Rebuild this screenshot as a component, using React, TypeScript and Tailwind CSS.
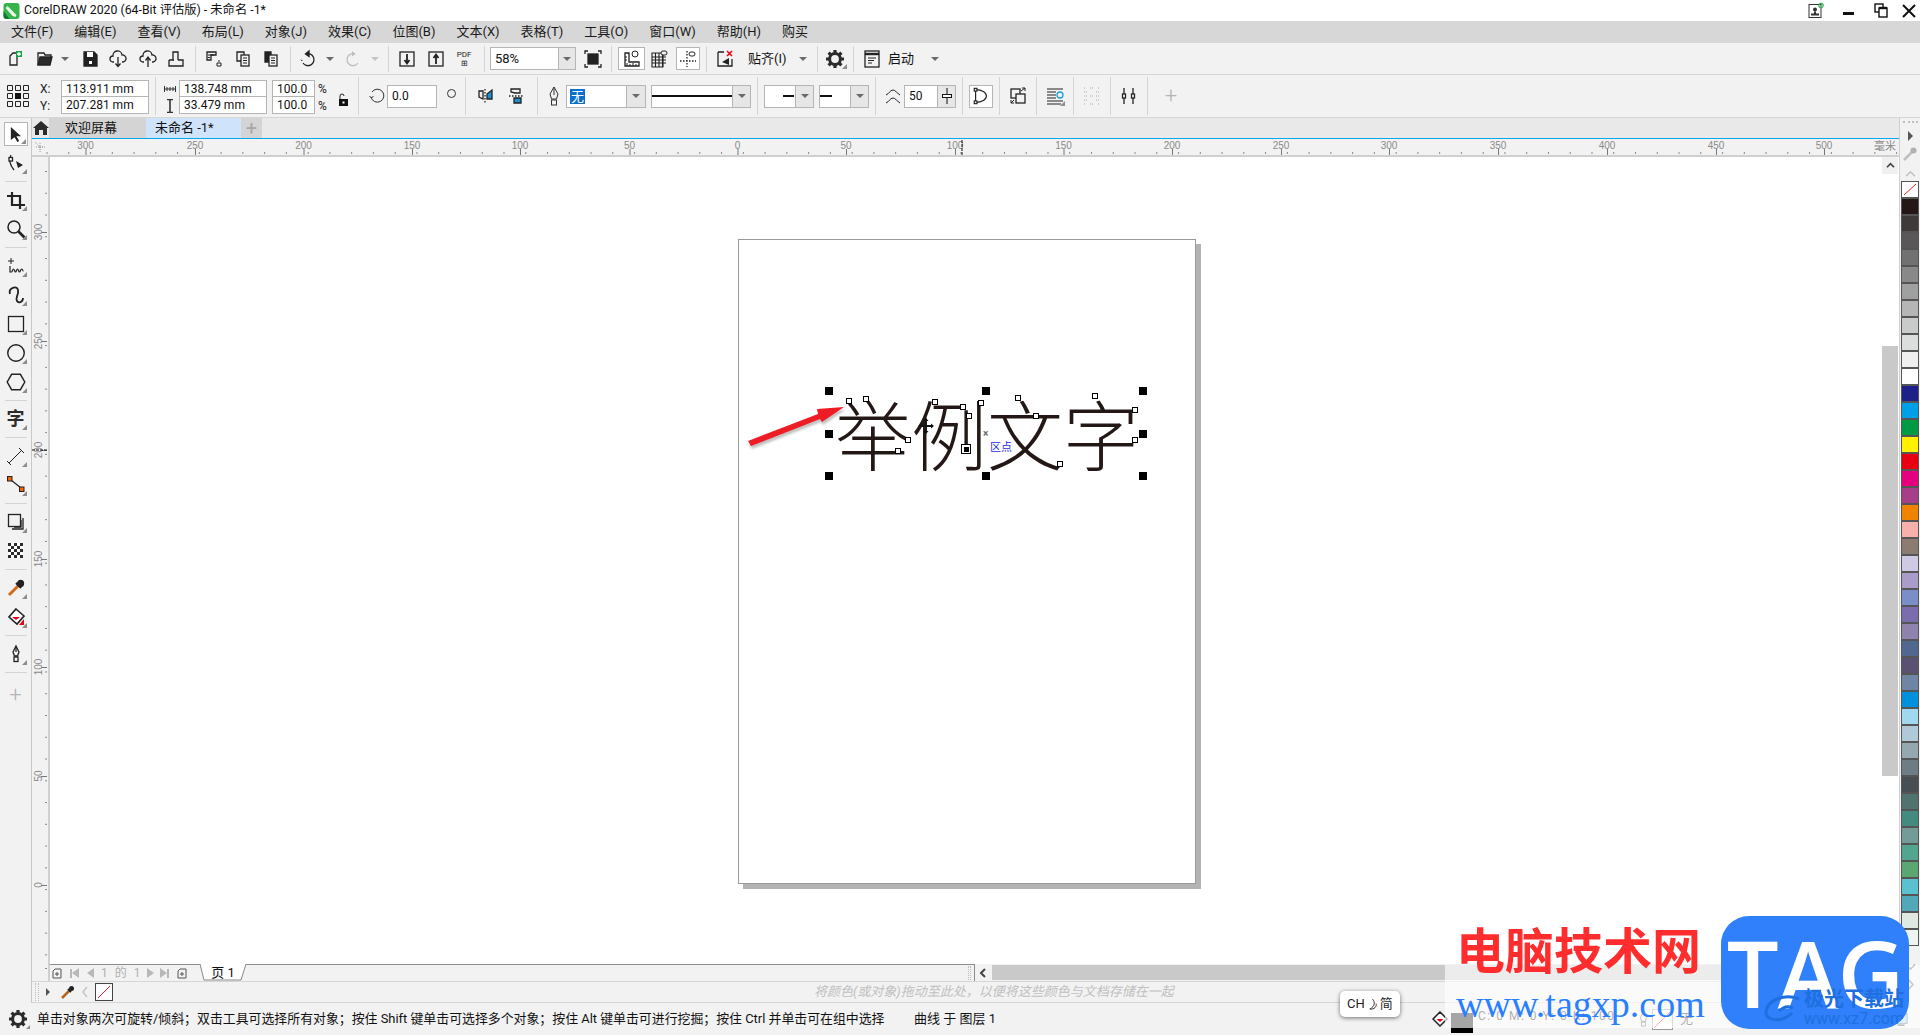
import type { ReactNode } from "react";

const FONT = 'Roboto,"Noto Sans CJK SC",sans-serif';

const SWATCHES = [
  "#231815", "#3e3a39", "#595757", "#727171", "#898989", "#9fa0a0", "#b5b5b6", "#c9caca", "#dcdddd", "#efefef", "#ffffff",
  "#1d2088", "#00a0e9", "#009944", "#fff100", "#e60012", "#e4007f", "#a73e8a", "#f08300", "#f5b1aa", "#8c7b70", "#cfc9e5",
  "#a99ccb", "#7a8fc8", "#7b6cae", "#8f82ad", "#506790", "#5a5072", "#6e86a3", "#0090dc", "#a0d8ef", "#b0c9d9", "#95a8b0",
  "#6e7d84", "#474f55", "#51736f", "#438b7e", "#739c98", "#52a68f", "#5aa772", "#5bc0cf", "#50a8b8", "#e0e8e2", "#eef4ef",
];

const MENUS = ["文件(F)", "编辑(E)", "查看(V)", "布局(L)", "对象(J)", "效果(C)", "位图(B)", "文本(X)", "表格(T)", "工具(O)", "窗口(W)", "帮助(H)", "购买"];

const NODES = [
  [849, 401], [866, 399], [908, 440], [898, 451], [935, 402], [963, 407], [981, 403], [969, 416], [1018, 398], [1036, 416], [1060, 464], [1095, 396], [1135, 410], [1135, 440],
];
const HANDLES = [
  [829, 391], [986, 391], [1143, 391], [829, 434], [1143, 434], [829, 476], [986, 476], [1143, 476],
];

function Sep({ className = "" }: { className?: string }) {
  return <div className={`w-px h-[26px] bg-[#d4d4d4] shrink-0 ${className}`} />;
}

function Tall({ className = "" }: { className?: string }) {
  return <div className={`w-px h-[38px] bg-[#d4d4d4] shrink-0 ${className}`} />;
}

function Ico({ children, className = "", w = 20, h = 20 }: { children: ReactNode; className?: string; w?: number; h?: number }) {
  return (
    <svg viewBox="0 0 20 20" width={w} height={h} fill="none" stroke="#222" strokeWidth="1.3" className={`shrink-0 ${className}`}>
      {children}
    </svg>
  );
}

function Drop({ className = "", light = false }: { className?: string; light?: boolean }) {
  return (
    <div className={`w-[9px] flex justify-center shrink-0 ${className}`}>
      <div className={`w-0 h-0 border-x-[4px] border-x-transparent border-t-[4px] ${light ? "border-t-[#c4c4c4]" : "border-t-[#6a6a6a]"}`} />
    </div>
  );
}

function DropCell({ className = "" }: { className?: string }) {
  return (
    <div className={`h-full bg-[#e6e6e6] border-l border-[#b5b5b5] flex items-center justify-center shrink-0 ${className}`}>
      <div className="w-0 h-0 border-x-[4px] border-x-transparent border-t-[4px] border-t-[#6a6a6a]" />
    </div>
  );
}

function Field({ value, className = "" }: { value: string; className?: string }) {
  return <div className={`h-[17px] bg-white border border-[#b5b5b5] flex items-center pl-1 text-[12px] leading-none text-[#111] ${className}`}>{value}</div>;
}

function Corner() {
  return <div className="absolute right-[4px] bottom-[3px] w-0 h-0 border-l-[5px] border-l-transparent border-b-[5px] border-b-[#8c8c8c]" />;
}

function Tool({ children, corner = true, className = "" }: { children: ReactNode; corner?: boolean; className?: string }) {
  return (
    <div className={`relative h-[29px] w-full flex items-center justify-center shrink-0 ${className}`}>
      {children}
      {corner && <Corner />}
    </div>
  );
}

function ToolSep() {
  return (
    <div className="h-[8px] shrink-0 flex items-center justify-center">
      <div className="w-[22px] h-px bg-[#d4d4d4]" />
    </div>
  );
}

function Gear({ size = 20 }: { size?: number }) {
  return (
    <svg viewBox="0 0 20 20" width={size} height={size} className="shrink-0">
      <circle cx="10" cy="10" r="5.4" fill="none" stroke="#2b2b2b" strokeWidth="3" />
      <g stroke="#2b2b2b" strokeWidth="3.2">
        <path d="M10 1v3M10 16v3M1 10h3M16 10h3M3.6 3.6l2.2 2.2M14.2 14.2l2.2 2.2M3.6 16.4l2.2-2.2M14.2 5.8l2.2-2.2" />
      </g>
    </svg>
  );
}

function TitleBar() {
  return (
    <div className="h-[21px] bg-white flex items-center shrink-0">
      <svg viewBox="0 0 16 16" width="17" height="16" className="ml-[3px] shrink-0">
        <rect width="16" height="16" rx="3" fill="#36b34a" />
        <path d="M4 3l9 9-1 2-3-1-7-8z" fill="#e6f5e6" />
        <path d="M0 8l6 8H3a3 3 0 0 1-3-3z" fill="#0c7a2c" />
      </svg>
      <span className="ml-[4px] text-[12.3px] text-[#111] whitespace-nowrap">CorelDRAW 2020 (64-Bit 评估版) - 未命名 -1*</span>
      <div className="ml-auto flex items-center">
        <svg viewBox="0 0 16 16" width="16" height="17" className="mr-[19px]">
          <rect x="1" y="2" width="12" height="13" fill="none" stroke="#333" />
          <circle cx="7" cy="7" r="2" fill="#333" />
          <path d="M3 13h8v-2H8V9H6v2H3z" fill="#333" />
          <circle cx="13" cy="3" r="2.2" fill="none" stroke="#2eb65a" strokeWidth="1.2" />
        </svg>
        <div className="w-[11px] h-[3px] bg-[#111] mr-[20px] mt-[6px]" />
        <svg viewBox="0 0 14 15" width="14" height="15" className="mr-[14px]">
          <rect x="1" y="1" width="8" height="8" fill="none" stroke="#111" strokeWidth="1.4" />
          <rect x="5" y="5" width="8" height="9" fill="white" stroke="#111" strokeWidth="1.4" />
          <path d="M5 5h8" stroke="#111" strokeWidth="2.4" />
        </svg>
        <svg viewBox="0 0 14 14" width="14" height="14" className="mr-[4px]">
          <path d="M1 1l12 12M13 1L1 13" stroke="#111" strokeWidth="2" />
        </svg>
      </div>
    </div>
  );
}

function MenuBar() {
  return (
    <div className="h-[22px] bg-[#d7d7d7] flex items-center pl-[11px] gap-[21px] shrink-0 text-[13px] text-[#1a1a1a]">
      {MENUS.map((m) => (
        <span key={m} className="whitespace-nowrap">{m}</span>
      ))}
    </div>
  );
}

function MainToolbar() {
  return (
    <div className="h-[32px] bg-[#f2f2f2] border-b border-[#d6d6d6] flex items-center shrink-0 text-[13px] text-[#111]">
      <Ico className="ml-[5px]"><path d="M5 7l3-3h4v12H5z" /><rect x="11" y="2" width="6" height="6" fill="#16a34a" stroke="none" /><path d="M14 3v4M12 5h4" stroke="#fff" /></Ico>
      <Ico className="ml-[10px]"><path d="M3 16V4h6l1 2h6v2" /><path d="M3 16l2-8h12l-2 8z" fill="#2b2b2b" /></Ico>
      <Drop className="ml-[5px]" />
      <Ico className="ml-[11px]"><path d="M4 3h10l3 3v11H4z" fill="#222" /><rect x="7" y="3" width="6" height="5" fill="#fff" stroke="none" /><rect x="9" y="12" width="3" height="3" fill="#fff" stroke="none" /></Ico>
      <Ico className="ml-[8px]"><path d="M6 13H5a3 3 0 0 1 0-6 4.5 4.5 0 0 1 9-1 3.5 3.5 0 0 1 1 7h-1" /><path d="M10 8v9M7.5 14.5l2.5 3 2.5-3" /></Ico>
      <Ico className="ml-[10px]"><path d="M6 13H5a3 3 0 0 1 0-6 4.5 4.5 0 0 1 9-1 3.5 3.5 0 0 1 1 7h-1" /><path d="M10 18V9M7.5 11.5L10 8l2.5 3.5" /></Ico>
      <Ico className="ml-[8px]"><path d="M7 11V3h5v8M3 11h5M12 11h5v6H3v-6" /></Ico>
      <Sep className="ml-[9px]" />
      <Ico className="ml-[8px]"><path d="M3 3h9v3H7v5H3z" /><path d="M4 6h6M4 8.5h2M13 14h4v3h-4zM14 12h2" strokeWidth="1" /></Ico>
      <Ico className="ml-[9px]"><path d="M4 3h7v9H4z" /><rect x="8" y="6" width="8" height="11" fill="#f2f2f2" /><path d="M10 9h4M10 11.5h4M10 14h4" strokeWidth="1" /></Ico>
      <Ico className="ml-[8px]"><path d="M4 3h6v10H4z" fill="#222" /><rect x="8" y="6" width="8" height="11" fill="#f2f2f2" /><path d="M10 9h4M10 11.5h4M10 14h4" strokeWidth="1" /></Ico>
      <Sep className="ml-[9px]" />
      <Ico className="ml-[7px]"><path d="M8 5a6 6 0 1 1-3 9" /><path d="M4 12l-1-2" strokeDasharray="1 1" /><path d="M11 2L7.5 5l3.5 2.5z" fill="#222" /></Ico>
      <Drop className="ml-[7px]" />
      <Ico className="ml-[9px]"><path d="M12 5a6 6 0 1 0 3 9" stroke="#bdbdbd" /><path d="M9 2l3.5 3L9 7.5z" fill="#bdbdbd" stroke="none" /></Ico>
      <Drop className="ml-[7px]" light />
      <Sep className="ml-[9px]" />
      <Ico className="ml-[8px]"><rect x="3" y="3" width="14" height="14" /><path d="M10 5v9M7.5 11l2.5 3.5 2.5-3.5" strokeWidth="1.8" /></Ico>
      <Ico className="ml-[9px]"><rect x="3" y="3" width="14" height="14" /><path d="M10 15V6M7.5 9L10 5.5 12.5 9" strokeWidth="1.8" /></Ico>
      <div className="ml-[8px] w-5 text-center text-[8px] leading-[9px] text-[#222] shrink-0">PDF<br />⊞</div>
      <Sep className="ml-[10px]" />
      <div className="ml-[5px] w-[86px] h-[23px] bg-white border border-[#b5b5b5] flex items-center shrink-0">
        <span className="pl-1 flex-1">58%</span>
        <DropCell className="w-[17px]" />
      </div>
      <Ico className="ml-[7px]"><rect x="5" y="5" width="10" height="10" fill="#222" /><path d="M2 5V2h3M15 2h3v3M18 15v3h-3M5 18H2v-3" /></Ico>
      <Sep className="ml-[8px]" />
      <div className="ml-[6px] w-[27px] h-[23px] border border-[#b5b5b5] bg-white flex items-center justify-center shrink-0">
        <Ico><path d="M3 4v13h14v-4H7V4z" /><path d="M5 14v3M8 15v2M11 14v3M14 15v2M3 8h2M3 11h2" strokeWidth="1" /><circle cx="13" cy="5" r="3" strokeWidth="1" /></Ico>
      </div>
      <Ico className="ml-[4px]"><path d="M3 4h11v14H3zM3 8h14M3 11h14M3 14h14M6.5 4v14M10 4v14M13.5 4v14" strokeWidth="1.1" /><rect x="12" y="2" width="6" height="4" rx="2" fill="#f2f2f2" strokeWidth="1" /></Ico>
      <div className="ml-[7px] w-[24px] h-[23px] border border-[#b5b5b5] bg-white flex items-center justify-center shrink-0">
        <Ico><path d="M9 2v16M2 12h16" strokeDasharray="1.5 1.5" /><rect x="11" y="3" width="6" height="4" rx="2" strokeWidth="1" /></Ico>
      </div>
      <Sep className="ml-[6px]" />
      <Ico className="ml-[8px]"><path d="M3 3h6M3 3v14h14v-7" /><path d="M12 2l5 5M17 2l-5 5" stroke="#e60012" strokeWidth="1.5" /><path d="M14 9l-7 4 7 3z" fill="#222" stroke="none" /></Ico>
      <span className="ml-[13px] w-[39px] whitespace-nowrap shrink-0">贴齐(I)</span>
      <Drop className="ml-[11px]" />
      <Sep className="ml-[10px]" />
      <div className="relative ml-[7px] shrink-0 w-5 h-5"><Gear /><div className="absolute -right-[2px] bottom-0 w-0 h-0 border-l-[5px] border-l-transparent border-b-[5px] border-b-[#8c8c8c]" /></div>
      <Sep className="ml-[8px]" />
      <Ico className="ml-[8px]"><rect x="3" y="2" width="14" height="16" /><path d="M3 5h14" strokeWidth="2.4" /><path d="M6 9h8M6 11.5h6M6 14h4" strokeWidth="1" /></Ico>
      <span className="ml-[6px] w-[26px] whitespace-nowrap shrink-0">启动</span>
      <Drop className="ml-[16px]" />
    </div>
  );
}

function PropertyBar() {
  return (
    <div className="h-[43px] bg-[#f2f2f2] border-b border-[#d6d6d6] flex items-center shrink-0 text-[12px] text-[#111]">
      <svg viewBox="0 0 24 24" width="24" height="24" fill="none" stroke="#222" className="ml-[6px] shrink-0">
        <path d="M1.5 1.5h5v5h-5zM9.5 1.5h5v5h-5zM17.5 1.5h5v5h-5zM1.5 9.5h5v5h-5zM17.5 9.5h5v5h-5zM1.5 17.5h5v5h-5zM9.5 17.5h5v5h-5zM17.5 17.5h5v5h-5z" />
        <rect x="9" y="9" width="6" height="6" fill="#111" stroke="none" />
      </svg>
      <div className="ml-[10px] w-[20px] mt-[2px] flex flex-col shrink-0 gap-[3px] text-[#222]">
        <span className="leading-[14px]">X:</span>
        <span className="leading-[14px]">Y:</span>
      </div>
      <div className="ml-[1px] w-[88px] mt-[2px] shrink-0 flex flex-col"><Field value="113.911 mm" /><Field value="207.281 mm" className="border-t-0" /></div>
      <Tall className="ml-[6px]" />
      <div className="ml-[8px] w-[12px] mt-[2px] shrink-0 flex flex-col items-center gap-[3px]">
        <svg viewBox="0 0 12 14" width="12" height="14" stroke="#333" fill="none"><path d="M.5 4v6M11.5 4v6M1 7h10" /><path d="M3 5v4M6 5v4M9 5v4" /></svg>
        <svg viewBox="0 0 12 14" width="12" height="14" stroke="#333" fill="none"><path d="M3 .5h6M3 13.5h6M6 1v12" strokeWidth="1.6" /></svg>
      </div>
      <div className="ml-[3px] w-[88px] mt-[2px] shrink-0 flex flex-col"><Field value="138.748 mm" /><Field value="33.479 mm" className="border-t-0" /></div>
      <div className="ml-[5px] w-[43px] mt-[2px] shrink-0 flex flex-col"><Field value="100.0" /><Field value="100.0" className="border-t-0" /></div>
      <div className="ml-[3px] w-[10px] mt-[2px] shrink-0 flex flex-col gap-[3px] text-[#222]">
        <span className="leading-[14px]">%</span>
        <span className="leading-[14px]">%</span>
      </div>
      <svg viewBox="0 0 10 13" width="10" height="13" className="ml-[10px] mt-[6px] shrink-0">
        <path d="M2 6V3a2 2 0 0 1 4 0" fill="none" stroke="#222" />
        <rect x="1" y="6" width="9" height="7" fill="#111" />
        <rect x="4.5" y="8.5" width="2" height="2" fill="#fff" />
      </svg>
      <Tall className="ml-[10px]" />
      <svg viewBox="0 0 16 16" width="16" height="16" fill="none" stroke="#333" className="ml-[10px] shrink-0">
        <path d="M3 4a6.5 6.5 0 1 1-1 5" /><path d="M.5 8L2.5 10 4.5 8" />
      </svg>
      <div className="ml-[2px] w-[50px] h-[23px] bg-white border border-[#b5b5b5] flex items-center pl-1 shrink-0">0.0</div>
      <div className="ml-[10px] w-[9px] h-[9px] rounded-full border border-[#333] mb-[6px] shrink-0" />
      <Tall className="ml-[9px]" />
      <Ico className="ml-[10px]"><path d="M9 3v14" strokeDasharray="1.5 1.5" /><path d="M3 5h4v8l-4-2z" /><path d="M11 13h5V4l-5 4z" fill="#1f8fcf" stroke="#222" /></Ico>
      <Ico className="ml-[10px]"><path d="M3 10h14" strokeDasharray="1.5 1.5" /><path d="M5 3h9v4H9l-4-1z" /><path d="M8 12h7v5H8z" fill="#1f8fcf" stroke="#222" /></Ico>
      <Tall className="ml-[11px]" />
      <svg viewBox="0 0 14 20" width="14" height="20" fill="none" stroke="#333" className="ml-[9px] shrink-0">
        <path d="M7 1l4 7-1.5 5h-5L3 8z" /><path d="M7 1v8" /><rect x="4.5" y="14" width="5" height="5" />
      </svg>
      <div className="ml-[5px] w-[80px] h-[23px] bg-white border border-[#b5b5b5] flex items-center pl-[3px] shrink-0">
        <span className="bg-[#0a6fd0] text-white px-px leading-[15px] text-[13px]">无</span>
        <DropCell className="ml-auto w-[19px]" />
      </div>
      <div className="ml-[5px] w-[100px] h-[23px] bg-white border border-[#b5b5b5] flex items-center shrink-0">
        <div className="flex-1 h-[1.5px] bg-[#111]" />
        <DropCell className="w-[18px]" />
      </div>
      <Tall className="ml-[6px]" />
      <div className="ml-[6px] w-[50px] h-[23px] bg-white border border-[#b5b5b5] flex items-center shrink-0">
        <div className="ml-auto w-[11px] h-[2px] bg-[#111]" />
        <DropCell className="ml-[1px] w-[18px]" />
      </div>
      <div className="ml-[5px] w-[50px] h-[23px] bg-white border border-[#b5b5b5] flex items-center shrink-0">
        <div className="w-[12px] h-[2px] bg-[#111]" />
        <DropCell className="ml-auto w-[18px]" />
      </div>
      <Tall className="ml-[6px]" />
      <Ico className="ml-[7px]" w={20} h={24}><path d="M3 9c3-1 4-5 7-5 2 0 4 3 7 5M3 17c3-1 4-5 7-5 2 0 4 3 7 5" strokeWidth="1" /></Ico>
      <div className="ml-[1px] w-[52px] h-[23px] bg-white border border-[#b5b5b5] flex items-center pl-1 shrink-0">
        <span>50</span>
        <div className="ml-auto w-[18px] h-full bg-[#e6e6e6] border-l border-[#b5b5b5] flex items-center justify-center">
          <svg viewBox="0 0 10 18" width="10" height="18"><path d="M5 1v16" stroke="#111" /><rect x=".5" y="7.5" width="9" height="3" fill="#fff" stroke="#111" /></svg>
        </div>
      </div>
      <Tall className="ml-[6px]" />
      <div className="ml-[6px] w-[24px] h-[23px] border border-[#b5b5b5] bg-white flex items-center justify-center shrink-0">
        <Ico w={18} h={18}><path d="M4 3v14" /><path d="M4 3c7 0 12 3 12 7s-5 7-12 7" /><rect x="2.500" y="1.500" width="3" height="3" fill="#fff" /><rect x="2.500" y="15.500" width="3" height="3" fill="#fff" /></Ico>
      </div>
      <Tall className="ml-[6px]" />
      <Ico className="ml-[8px]"><rect x="3" y="3" width="9" height="9" /><rect x="8" y="8" width="9" height="9" fill="#f2f2f2" /><path d="M13 5l4-3M14 2h3v3M3 17l3-3M3 14v3h3" strokeWidth="1" /></Ico>
      <Tall className="ml-[8px]" />
      <div className="relative ml-[8px] shrink-0 w-5 h-5">
        <Ico><path d="M2 3h16M2 6h9M2 9h9M2 12h9M2 15h16M2 18h14" strokeWidth="1" /><circle cx="15" cy="9" r="3" stroke="#1f9fdc" /></Ico>
        <div className="absolute right-0 bottom-0 w-0 h-0 border-l-[5px] border-l-transparent border-b-[5px] border-b-[#8c8c8c]" />
      </div>
      <Tall className="ml-[8px]" />
      <Ico className="ml-[8px]"><path d="M2 2h2M8 2h4M16 2h2M2 6h4M14 6h4M2 10h4M8 10h4M14 10h4M2 14h4M14 14h4M2 18h2M8 18h4M16 18h2" stroke="#c0c0c0" strokeDasharray="1 1" /></Ico>
      <Tall className="ml-[8px]" />
      <Ico className="ml-[8px]"><path d="M5 2v16M14 2v16" /><rect x="3.500" y="8" width="3" height="4" fill="#fff" /><rect x="12.500" y="8" width="3" height="4" fill="#fff" /></Ico>
      <Tall className="ml-[8px]" />
      <div className="ml-[13px] text-[#b4b4b4] text-[22px] leading-none w-5 text-center shrink-0 font-light">+</div>
    </div>
  );
}

function LeftBar() {
  return (
    <div className="w-[32px] shrink-0 bg-[#f2f2f2] border-r border-[#c8c8c8] flex flex-col">
      <div className="relative mx-auto mt-[4px] w-[24px] h-[24px] bg-white border border-[#b5b5b5] flex items-center justify-center shrink-0">
        <svg viewBox="0 0 14 18" width="13" height="17"><path d="M2 1v14l4-3 3 5 2-1-3-5h5z" fill="#222" /></svg>
        <div className="absolute right-[1px] bottom-[1px] w-0 h-0 border-l-[5px] border-l-transparent border-b-[5px] border-b-[#8c8c8c]" />
      </div>
      <Tool className="mt-[2px]"><Ico><path d="M5 2c-2 4-2 9 3 15" /><rect x="3" y="4.500" width="3.500" height="3.500" fill="#fff" /><path d="M10 8l7 4-5 3z" fill="#222" stroke="none" /></Ico></Tool>
      <ToolSep />
      <Tool><Ico><path d="M6 2v13h13M1 6h13v13" strokeWidth="2.2" /></Ico></Tool>
      <Tool><Ico><circle cx="8" cy="8" r="6" strokeWidth="1.500" /><path d="M12.500 12.500l6 6" strokeWidth="2.600" /></Ico></Tool>
      <ToolSep />
      <Tool><Ico><path d="M5 2v6M2 5h6" strokeWidth="1" /><path d="M4 10v6h1.500c1 0 1-3 2-3s1 3 2 3 1-3 2-3 1 3 2 3 1-3 2-3 1 2 2 2" strokeWidth="1.200" /></Ico></Tool>
      <Tool><Ico><path d="M4 9c-2-6 7-9 8-4s-3 7-1 11c1 2 6 2 6-3" strokeWidth="1.800" /></Ico></Tool>
      <Tool><Ico><rect x="2.500" y="2.500" width="15" height="15" /></Ico></Tool>
      <Tool><Ico w={22} h={22}><circle cx="10" cy="10" r="7.500" /></Ico></Tool>
      <Tool><Ico w={22} h={22}><path d="M6 3h8l4 7-4 7H6l-4-7z" /></Ico></Tool>
      <ToolSep />
      <Tool><span className="text-[18px] font-bold leading-none text-[#2b2b2b]">字</span></Tool>
      <ToolSep />
      <Tool><Ico><path d="M3 17L16 4M13 2l5 5M1 15l4 4" strokeWidth="1" /></Ico></Tool>
      <Tool><Ico><path d="M5 5l10 8" /><rect x="1.500" y="1.500" width="4.500" height="4.500" fill="#f26500" stroke="#222" strokeWidth="1" /><rect x="13.500" y="12" width="4.500" height="4.500" fill="#f26500" stroke="#222" strokeWidth="1" /></Ico></Tool>
      <ToolSep />
      <Tool><Ico><rect x="2.500" y="2.500" width="12" height="12" /><path d="M17 6v11H6M15 8v7H8" /></Ico></Tool>
      <Tool corner={false}>
        <div className="w-[15px] h-[15px] grid grid-cols-5 grid-rows-5 bg-white">
          {[...Array(25)].map((_, i) => (
            <div key={i} className={i % 2 === 0 ? "bg-[#2b2b2b]" : "bg-white"} />
          ))}
        </div>
      </Tool>
      <ToolSep />
      <Tool><Ico><path d="M3 17l9-9" stroke="#d56b18" strokeWidth="3" /><path d="M10 5l5 5" strokeWidth="2" /><circle cx="14.500" cy="5.500" r="3" fill="#222" /></Ico></Tool>
      <Tool>
        <Ico><path d="M10 2l8 7-7 8-8-7z" fill="#fff" strokeWidth="1.600" /><path d="M6 10h8l-4 3z" fill="#e60012" stroke="none" /><path d="M18 12v6h-5z" fill="#e60012" stroke="none" /></Ico>
      </Tool>
      <ToolSep />
      <Tool><Ico><path d="M10 2l3 6-1.500 4h-3L7 8z" /><path d="M10 2v6" /><rect x="8" y="13" width="4" height="4.500" /></Ico></Tool>
      <ToolSep />
      <Tool corner={false} className="mt-[4px]"><span className="text-[#b4b4b4] text-[22px] leading-none font-light">+</span></Tool>
    </div>
  );
}

function TabRow() {
  return (
    <div className="h-[21px] shrink-0 bg-[#e9e9e9] border-b border-[#00a8f0] flex items-stretch text-[13px] text-[#111]">
      <div className="w-[17px] flex items-center justify-center shrink-0">
        <svg viewBox="0 0 16 16" width="16" height="16"><path d="M8 1l8 7h-2v7h-4v-5H6v5H2V8H0z" fill="#2b2b2b" /></svg>
      </div>
      <div className="w-[97px] bg-[#d4d4d4] pl-[16px] flex items-center shrink-0">欢迎屏幕</div>
      <div className="w-[95px] bg-[#cfe3fb] pl-[9px] flex items-center shrink-0">未命名 -1*</div>
      <div className="w-[21px] bg-[#d4d4d4] text-[#a8a8a8] text-[20px] flex items-center justify-center leading-none shrink-0">+</div>
    </div>
  );
}

function HRuler() {
  const labels = [
    [86.5, "300"], [196, "250"], [304.5, "200"], [413, "150"], [521, "100"], [630.5, "50"], [738.5, "0"], [847, "50"], [956, "100"], [1064.5, "150"], [1173, "200"],
    [1282, "250"], [1390, "300"], [1499, "350"], [1608, "400"], [1717, "450"], [1825, "500"],
  ] as const;
  const ticks = Array.from({ length: 90 }, (_, i) => 4 + i * 21.76);
  return (
    <div className="h-[18px] shrink-0 bg-[#f2f2f2] border-b-2 border-[#d0d0d0]">
      <svg width="1867" height="16" viewBox="33 139 1867 16" className="block">
        <path d="M36 142l5 5M41 147v5M41 147h5M37 147h8M41 143v8" stroke="#a0a0a0" strokeWidth="1" strokeDasharray="1 1" fill="none" />
        {ticks.map((t, i) => (
          <rect key={i} x={t} y={152} width="1" height="2" fill="#888" />
        ))}
        {labels.map(([x, l]) => (
          <g key={x}>
            <rect x={x} y={149} width="1" height="6" fill="#777" />
            <text x={x} y={149} textAnchor="middle" fontSize="10" fill="#8a8a8a" fontFamily="Liberation Sans">{l}</text>
          </g>
        ))}
        <text x="1886" y="150" textAnchor="middle" fontSize="11" fill="#8a8a8a" fontFamily="Noto Sans CJK SC">毫米</text>
        <path d="M963 140v15" stroke="#111" strokeDasharray="3 1" />
      </svg>
    </div>
  );
}

function VRuler() {
  const labels = [[232, "300"], [341, "250"], [450, "200"], [559, "150"], [667, "100"], [776, "50"], [885, "0"]] as const;
  const ticks = Array.from({ length: 38 }, (_, i) => 14 + i * 21.76);
  return (
    <div className="w-[18px] shrink-0 bg-[#f2f2f2] border-r-2 border-[#d0d0d0]">
      <svg width="16" height="808" viewBox="33 157 16 808" className="block">
        {ticks.map((t, i) => (
          <rect key={i} x="46" y={157 + t} width="2" height="1" fill="#888" />
        ))}
        {labels.map(([y, l]) => (
          <g key={y}>
            <rect x="42" y={y} width="6" height="1" fill="#777" />
            <text x="0" y="0" textAnchor="middle" fontSize="10" fill="#8a8a8a" fontFamily="Liberation Sans" transform={`translate(43 ${y}) rotate(-90)`}>{l}</text>
          </g>
        ))}
        <path d="M33 450h15" stroke="#111" strokeDasharray="3 1" />
      </svg>
    </div>
  );
}

function Canvas() {
  return (
    <div className="relative flex-1 bg-white overflow-hidden">
      <div className="absolute left-[688px] top-[82px] w-[458px] h-[645px] bg-white border border-[#9a9a9a] shadow-[5px_5px_0_#b3b3b3]" />
      <div className="absolute left-[785px] top-[235px] flex text-[76px] leading-[80px] font-light text-[#231815] whitespace-nowrap" style={{ fontFamily: '"Noto Sans CJK SC",sans-serif' }}>
        <span className="w-[76px]">举</span>
        <span className="w-[76px]">例</span>
        <span className="w-[76px]">文</span>
        <span className="w-[76px]">字</span>
      </div>
      <svg className="absolute left-[695px] top-[240px]" width="110" height="70" viewBox="745 397 110 70">
        <path d="M748 441L818 414l-1-5 27-2-22 15-2-3-69 27z" fill="#777" opacity=".45" transform="translate(1 3)" className="blur-[1px]" />
        <path d="M748 441L818 414l-1-5 27-2-22 15-2-3-69 27z" fill="#ee1c25" />
      </svg>
      {NODES.map(([x, y]) => (
        <div key={`${x}-${y}`} className="absolute w-[6px] h-[6px] -ml-[3px] -mt-[3px] bg-white border border-black" style={{ left: x - 50, top: y - 157 }} />
      ))}
      {HANDLES.map(([x, y]) => (
        <div key={`${x}-${y}`} className="absolute w-[8px] h-[8px] -ml-[4px] -mt-[4px] bg-black" style={{ left: x - 50, top: y - 157 }} />
      ))}
      <svg className="absolute left-[868px] top-[261px]" width="16" height="16" viewBox="0 0 16 16">
        <path d="M8 1v14M1 8h14" stroke="#111" strokeWidth="1.800" />
        <path d="M8 0l2.500 3h-5zM8 16l2.500-3h-5zM0 8l3-2.500v5zM16 8l-3-2.500v5z" fill="#111" />
      </svg>
      <div className="absolute left-[911px] top-[287px] w-[10px] h-[10px] border border-black bg-white flex items-center justify-center">
        <div className="w-[5px] h-[5px] bg-black" />
      </div>
      <div className="absolute left-[933px] top-[272px] text-[#666] text-[10px] leading-none font-bold">×</div>
      <div className="absolute left-[940px] top-[283px] text-[#2b2bf0] text-[11px] leading-[16px] whitespace-nowrap">区点</div>
    </div>
  );
}

function VScroll() {
  return (
    <div className="w-[17px] shrink-0 bg-white pr-px flex flex-col">
      <div className="h-[17px] bg-[#f0f0f0] flex items-center justify-center shrink-0">
        <svg viewBox="0 0 10 8" width="9" height="7"><path d="M1 6l4-4 4 4" fill="none" stroke="#444" strokeWidth="2" /></svg>
      </div>
      <div className="mt-[172px] h-[430px] bg-[#c9c9c9] shrink-0" />
      <svg viewBox="0 0 10 8" width="9" height="7" className="mt-auto mb-[6px] mx-auto shrink-0"><path d="M1 2l4 4 4-4" fill="none" stroke="#444" strokeWidth="2" /></svg>
    </div>
  );
}

function PageRow() {
  return (
    <div className="h-[18px] shrink-0 bg-[#f2f2f2] border-b border-[#d6d6d6] flex items-stretch text-[12px] text-[#b0b0b0]">
      <div className="w-[18px] shrink-0 border-r-2 border-[#d0d0d0] flex flex-col items-end pr-[1px] pt-[4px] gap-[9px]">
        <div className="w-[2px] h-px bg-[#888]" />
      </div>
      <div className="w-[925px] shrink-0 flex items-center border-t border-r border-[#8c8c8c]">
        <svg viewBox="0 0 10 11" width="10" height="11" fill="none" stroke="#555" className="ml-[2px] shrink-0"><path d="M1 3l2-2h6v9H1zM5 4v4M3 6h4" /></svg>
        <div className="ml-[8px] w-[1.5px] h-[9px] bg-[#b8b8b8] shrink-0" />
        <div className="w-0 h-0 border-y-[5px] border-y-transparent border-r-[7px] border-r-[#b8b8b8] shrink-0" />
        <div className="ml-[8.5px] w-0 h-0 border-y-[5px] border-y-transparent border-r-[7px] border-r-[#b8b8b8] shrink-0" />
        <span className="ml-[7px] w-[36px] text-center whitespace-nowrap tracking-[2px] shrink-0">1 的 1</span>
        <div className="ml-[9.5px] w-0 h-0 border-y-[5px] border-y-transparent border-l-[7px] border-l-[#b8b8b8] shrink-0" />
        <div className="ml-[6.5px] w-0 h-0 border-y-[5px] border-y-transparent border-l-[7px] border-l-[#b8b8b8] shrink-0" />
        <div className="w-[1.5px] h-[9px] bg-[#b8b8b8] shrink-0" />
        <svg viewBox="0 0 10 11" width="10" height="11" fill="none" stroke="#555" className="ml-[8px] shrink-0"><path d="M1 3l2-2h6v9H1zM5 4v4M3 6h4" /></svg>
        <div className="relative ml-[13px] w-[47px] h-[17px] -mt-px flex items-center justify-center text-[13px] text-[#111] shrink-0">
          <svg className="absolute inset-0" width="47" height="17" viewBox="0 0 47 17"><path d="M0 0l4 16h37l5-16" fill="#fff" stroke="#888" /></svg>
          <span className="relative">页 1</span>
        </div>
        <div className="ml-auto mr-[3px] w-[3px] h-[14px] border-x border-dotted border-[#bdbdbd] shrink-0" />
      </div>
      <div className="ml-[4px] flex items-center shrink-0">
        <svg viewBox="0 0 8 10" width="8" height="10"><path d="M6 1L2 5l4 4" fill="none" stroke="#444" strokeWidth="2" /></svg>
      </div>
      <div className="ml-[5px] flex-1 my-px bg-[#c9c9c9]" />
      <svg viewBox="0 0 14 14" width="14" height="14" fill="none" stroke="#777" className="mx-[2px] my-auto shrink-0"><circle cx="7" cy="7" r="5.500" /><circle cx="7" cy="7" r="1.500" /></svg>
    </div>
  );
}

function DockerRow() {
  return (
    <div className="h-[21px] shrink-0 bg-[#f2f2f2] flex items-center border-b border-[#d6d6d6] text-[#111]">
      <div className="ml-[3px] w-[4px] h-[18px] border-x border-dotted border-[#bdbdbd] shrink-0" />
      <div className="ml-[7px] w-0 h-0 border-y-[4px] border-y-transparent border-l-[4px] border-l-[#555] shrink-0" />
      <svg viewBox="0 0 14 14" width="14" height="14" className="ml-[11px] shrink-0"><path d="M1 13l8-8" stroke="#b5651d" strokeWidth="2.500" /><path d="M7 4l3 3" stroke="#222" strokeWidth="2" /><circle cx="10.500" cy="3.500" r="2.500" fill="#222" /></svg>
      <svg viewBox="0 0 8 12" width="8" height="12" className="ml-[6px] shrink-0"><path d="M6 1L2 6l4 5" fill="none" stroke="#c4c4c4" strokeWidth="1.500" /></svg>
      <svg viewBox="0 0 18 18" width="18" height="18" className="ml-[6px] shrink-0">
        <rect x=".5" y=".5" width="17" height="17" fill="#fff" stroke="#444" />
        <path d="M3 15L15 3" stroke="#e8222a" />
      </svg>
      <span className="ml-[701px] text-[13px] italic text-[#c0c0c0] whitespace-nowrap">将颜色(或对象)拖动至此处，以便将这些颜色与文档存储在一起</span>
    </div>
  );
}

function StatusBar() {
  return (
    <div className="h-[32px] shrink-0 bg-[#f2f2f2] flex items-center text-[13px] text-[#111]">
      <div className="relative ml-[8px] w-5 h-5 shrink-0"><Gear /><div className="absolute -right-[2px] bottom-0 w-0 h-0 border-l-[4px] border-l-transparent border-b-[4px] border-b-[#8c8c8c]" /></div>
      <span className="ml-[9px] w-[847px] shrink-0 whitespace-nowrap text-[12.9px]">单击对象两次可旋转/倾斜；双击工具可选择所有对象；按住 Shift 键单击可选择多个对象；按住 Alt 键单击可进行挖掘；按住 Ctrl 并单击可在组中选择</span>
      <span className="ml-[30px] w-[80px] shrink-0 whitespace-nowrap">曲线 于 图层 1</span>
      <svg viewBox="0 0 16 16" width="16" height="16" className="ml-[438px] shrink-0"><path d="M8 1l7 7-7 7-7-7z" fill="#fff" stroke="#222" strokeWidth="1.500" /><path d="M4.500 8h7L8 11z" fill="#e60012" /></svg>
      <div className="ml-[3px] w-[22px] h-[20px] bg-black mt-[8px] shrink-0" />
      <span className="ml-[5px] w-[160px] mb-[6px] whitespace-nowrap tracking-[1.5px] shrink-0 text-[12px]">C: 0 M: 0 Y: 0 K: 100</span>
      <svg viewBox="0 0 14 20" width="11" height="16" fill="none" stroke="#333" className="shrink-0"><path d="M7 1l4 7-1.500 5h-5L3 8z" /><rect x="4.500" y="14" width="5" height="5" /></svg>
      <svg viewBox="0 0 21 21" width="21" height="21" className="ml-[3px] shrink-0"><rect x=".5" y=".5" width="20" height="20" fill="#fff" stroke="#999" /><path d="M2 19L19 2" stroke="#e8222a" /></svg>
      <span className="ml-[7px]">无</span>
      <svg viewBox="0 0 16 16" width="14" height="14" className="ml-auto mr-[12px] shrink-0"><rect x="1" y="2" width="14" height="11" fill="#9fd3ea" stroke="#555" /><path d="M4 15h8" stroke="#555" strokeWidth="2" /></svg>
    </div>
  );
}

function Palette() {
  return (
    <div className="w-[21px] shrink-0 bg-[#f2f2f2] border-l border-[#d0d0d0] flex flex-col items-center overflow-hidden">
      <div className="mt-[3px] h-[3px] w-[15px] border-t-2 border-dotted border-[#c0c0c0] shrink-0" />
      <div className="mt-[7px] w-0 h-0 border-y-[5px] border-y-transparent border-l-[5px] border-l-[#555] shrink-0" />
      <svg viewBox="0 0 14 14" width="14" height="14" className="mt-[6px] shrink-0"><path d="M1 13l8-8" stroke="#c0c0c0" strokeWidth="2.500" /><circle cx="10.500" cy="3.500" r="3" fill="#b0b0b0" /></svg>
      <svg viewBox="0 0 12 8" width="11" height="7" className="mt-[9px] shrink-0"><path d="M1 7l5-5 5 5" fill="none" stroke="#c4c4c4" strokeWidth="1.800" /></svg>
      <div className="mt-[4px] flex flex-col w-[18px] shrink-0">
        <svg viewBox="0 0 18 17" width="18" height="17" className="block"><rect x=".5" y=".5" width="17" height="16" fill="#fff" stroke="#555" /><path d="M3 14L15 3" stroke="#e8222a" /></svg>
        {SWATCHES.map((c, i) => (
          <div key={i} className="h-[17px] border border-[#555]" style={{ backgroundColor: c }} />
        ))}
      </div>
      <svg viewBox="0 0 12 8" width="11" height="7" className="mt-[17px] shrink-0"><path d="M1 2l5 5 5-5" fill="none" stroke="#666" strokeWidth="1.800" /></svg>
      <svg viewBox="0 0 8 12" width="7" height="11" className="mt-[9px] shrink-0"><path d="M2 1l5 5-5 5" fill="none" stroke="#666" strokeWidth="1.800" /></svg>
    </div>
  );
}

function Watermark() {
  return (
    <>
      <div className="absolute left-[1445px] top-[965px] w-[475px] h-[63px] bg-white/65" />
      <div className="absolute left-[1456px] top-[924px] text-[49px] leading-[48px] font-bold text-[#ff2d2d] whitespace-nowrap" style={{ fontFamily: '"Noto Sans CJK SC",sans-serif' }}>电脑技术网</div>
      <div className="absolute left-[1456px] top-[982px] text-[38px] leading-[44px] text-[#2a7fff] whitespace-nowrap" style={{ fontFamily: '"Liberation Serif",serif' }}>www.tagxp.com</div>
      <div className="absolute left-[1721px] top-[916px] w-[188px] h-[113px] rounded-[28px] bg-[#2f80fa] flex items-center justify-center overflow-hidden">
        <span className="text-white text-[92px] leading-none font-semibold tracking-[-1px]" style={{ fontFamily: '"Open Sans",sans-serif' }}>TAG</span>
        <svg viewBox="0 0 40 30" width="40" height="30" fill="none" stroke="#1f6fe0" strokeWidth="3" className="absolute left-[42px] top-[78px]"><path d="M36 5C22-1 4 6 3 18c-1 9 16 11 26 1" /><path d="M16 17c5-5 10-5 14-3" /></svg>
        <span className="absolute left-[83px] top-[68px] text-[20px] font-bold text-[#1f6fe0] whitespace-nowrap">极光下载站</span>
        <span className="absolute left-[83px] top-[91px] text-[16px] text-[#1f6fe0] whitespace-nowrap">www.xz7.com</span>
      </div>
    </>
  );
}

export default function App() {
  return (
    <div className="relative w-[1920px] h-[1035px] overflow-hidden flex flex-col bg-white" style={{ fontFamily: FONT }}>
      <TitleBar />
      <MenuBar />
      <MainToolbar />
      <PropertyBar />
      <div className="flex-1 min-h-0 flex">
        <LeftBar />
        <div className="w-[1867px] shrink-0 flex flex-col">
          <TabRow />
          <HRuler />
          <div className="flex-1 min-h-0 flex">
            <VRuler />
            <Canvas />
            <VScroll />
          </div>
          <PageRow />
          <DockerRow />
        </div>
        <Palette />
      </div>
      <StatusBar />
      <div className="absolute left-[1340px] top-[991px] w-[60px] h-[26px] rounded-[5px] bg-white shadow-[0_1px_4px_rgba(0,0,0,.55)] flex items-center justify-center text-[13px] text-[#222] whitespace-nowrap gap-[3px]">
        CH
        <svg viewBox="0 0 10 14" width="9" height="13"><path d="M5 1c3 3 3 8-3 11 5 1 8-3 7-6" fill="none" stroke="#222" /></svg>
        简
      </div>
      <Watermark />
    </div>
  );
}
